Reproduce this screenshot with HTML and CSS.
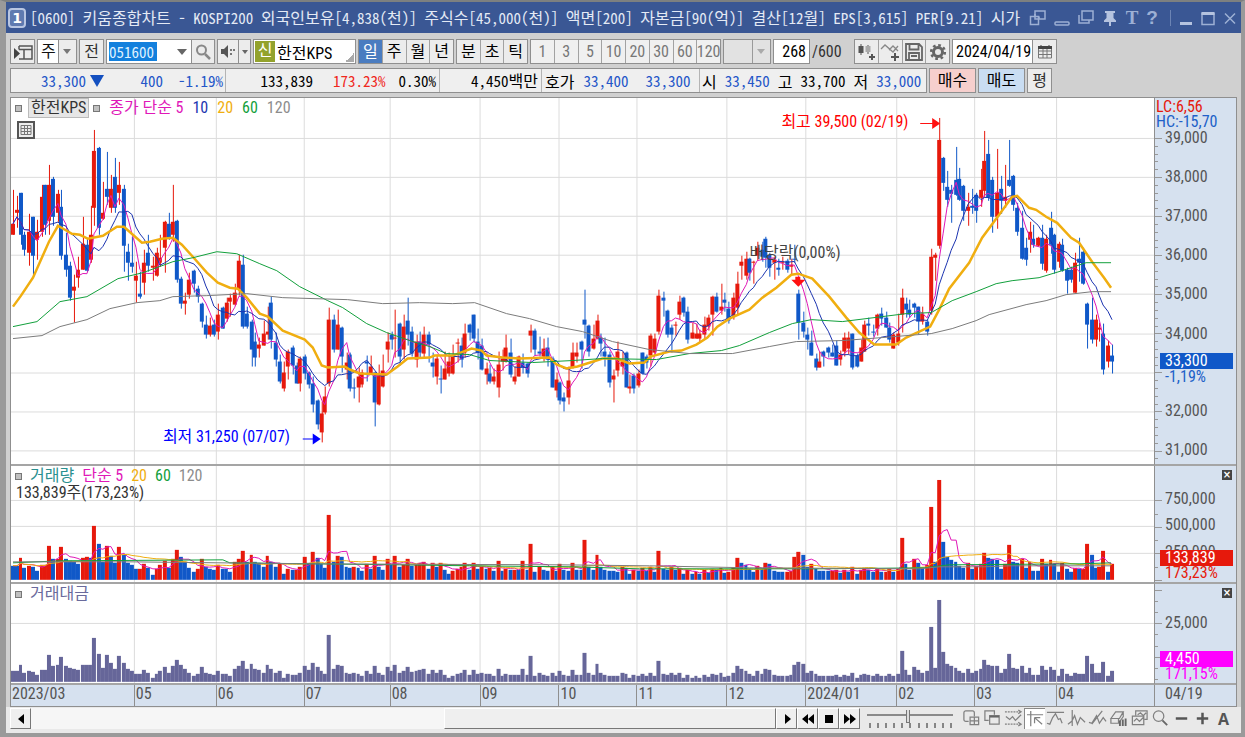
FILE: index.html
```html
<!DOCTYPE html>
<html lang="ko">
<head>
<meta charset="utf-8">
<title>[0600] 키움종합차트</title>
<link rel="stylesheet" href="styles.css">
</head>
<body>
<div class="window">
  <header class="titlebar">
    <span class="win-no">1</span>
    <h1 class="title">[0600] <span class="ko">키움종합차트</span> - KOSPI200 <span class="ko">외국인보유</span>[4,838(<span class="ko">천</span>)] <span class="ko">주식수</span>[45,000(<span class="ko">천</span>)] <span class="ko">액면</span>[200] <span class="ko">자본금</span>[90(<span class="ko">억</span>)] <span class="ko">결산</span>[12<span class="ko">월</span>] EPS[3,615] PER[9.21] <span class="ko">시가</span></h1>
    <div class="win-tools">
      <button aria-label="화면 복사"><svg viewBox="0 0 18 18"><path d="M6 2h10v8H6zM1.500 7.500h8v8h-8z"/><path d="M6 7.500V5M10 10v-2.500"/></svg></button>
      <button aria-label="숨기기"><svg viewBox="0 0 18 18"><rect x="2" y="13" width="14" height="3" rx="1"/></svg></button>
      <button aria-label="겹치기"><svg viewBox="0 0 18 18"><path d="M5 2h11v9H5zM2 6v8h10v-3"/></svg></button>
      <button aria-label="고정"><svg viewBox="0 0 18 18"><path class="fill" d="M4 2h10v2h-1.500v5l2.500 2.500V13h-5v4H8v-4H3v-1.500L5.500 9V4H4z"/></svg></button>
      <button aria-label="글자" class="glyph">T</button>
      <button aria-label="도움말" class="glyph q">?</button>
      <i class="sep"></i>
      <button aria-label="최소화"><svg viewBox="0 0 18 18"><path class="thick" d="M3 14.500h12"/></svg></button>
      <button aria-label="최대화"><svg viewBox="0 0 18 18"><path d="M3 4.500h12v11H3z"/><path class="thick" d="M2.500 4.500h13"/></svg></button>
      <button aria-label="닫기"><svg viewBox="0 0 18 18"><path d="M4 4.500l10 10M14 4.500l-10 10"/></svg></button>
    </div>
  </header>

  <form class="toolbar">
    <button type="button" class="btn w25" aria-label="패널"><svg width="20" height="20" viewBox="0 0 20 20"><path d="M6 4h13v13H6M6 7.500h13M11 7.500V17M6 4v3.500" fill="none" stroke="#555" stroke-width="1.500"/><path d="M1 6v11l6-5.500z" fill="#444"/></svg></button>
    <label class="drop kind"><select aria-label="구분"><option>주</option></select></label>
    <button type="button" class="btn w25">전</button>
    <span class="code stock"><input class="code-in" aria-label="종목코드" value="051600"><button type="button" class="arrow" aria-label="목록"></button><button type="button" class="inner" aria-label="검색"><svg width="20" height="20" viewBox="0 0 20 20"><circle cx="8.500" cy="8" r="4.500" fill="none" stroke="#888" stroke-width="2"/><path d="M12 12l5 5" stroke="#888" stroke-width="2.500"/></svg></button></span>
    <span class="code sound"><button type="button" class="inner first" aria-label="음성"><svg width="18" height="18" viewBox="0 0 18 18"><path d="M2 6h3l4-4v13l-4-4H2z" fill="#555"/><path d="M11 6h2v2h-2zM14 6h2v2h-2zM11 10h2v2h-2z" fill="#777"/></svg></button><button type="button" class="arrow slim" aria-label="음성 목록"></button></span>
    <span class="name"><b>신</b><input aria-label="종목명" value="한전KPS"></span>
    <span class="group g4"><button type="button" class="on">일</button><button type="button">주</button><button type="button">월</button><button type="button">년</button></span>
    <span class="group g3"><button type="button">분</button><button type="button">초</button><button type="button">틱</button></span>
    <span class="group g8 dim"><button type="button">1</button><button type="button">3</button><button type="button">5</button><button type="button">10</button><button type="button">20</button><button type="button">30</button><button type="button">60</button><button type="button">120</button></span>
    <label class="drop empty"><select aria-label="주기" disabled><option></option></select></label>
    <span class="count"><input aria-label="표시 봉수" value="268"><span>/600</span></span>
    <span class="group g4">
      <button type="button" aria-label="차트 종류"><svg width="20" height="20" viewBox="0 0 20 20"><path d="M5 2v11M12 3v9" stroke="#555"/><path d="M2.500 4h5v7h-5z" fill="#555"/><path d="M9.500 4h5v6h-5z" fill="#aaa"/><path d="M13 15h6M16 12v6" stroke="#555" stroke-width="2"/></svg></button>
      <button type="button" aria-label="지표 추가"><svg width="20" height="20" viewBox="0 0 20 20"><path d="M1 7l4-4 8 7 5-6M9 8l4-4 5 5" fill="none" stroke="#888" stroke-width="1.300"/><path d="M11 15h8M15 11v8" stroke="#555" stroke-width="2"/></svg></button>
      <button type="button" aria-label="저장"><svg width="20" height="20" viewBox="0 0 20 20"><path d="M2 2h13l3 3v13H2zM5.500 2v5.500h9V2M5 18v-7h10v7M7 14h6" fill="none" stroke="#666" stroke-width="1.800"/></svg></button>
      <button type="button" aria-label="설정"><svg width="20" height="20" viewBox="0 0 20 20"><circle cx="10" cy="10" r="4.500" fill="none" stroke="#666" stroke-width="3"/><circle cx="10" cy="10" r="6.800" fill="none" stroke="#666" stroke-width="2.600" stroke-dasharray="2.670 2.670"/></svg></button>
    </span>
    <span class="date"><input aria-label="날짜" value="2024/04/19"><button type="button" aria-label="달력"><svg width="16" height="16" viewBox="0 0 16 16"><path d="M1.500 3h13v11h-13zM1.500 10.500h13M1.500 7h13M6 5v9M10 5v9" fill="none" stroke="#777"/><path d="M1 2h14v3H1z" fill="#444"/><path d="M4 1v2M12 1v2" stroke="#444"/></svg></button></span>
  </form>

  <div class="quote">
    <div class="info">
      <div class="cell c1"><span class="n1 dn">33,300</span><i class="tri"></i><span class="n2 dn">400</span><span class="n3 dn">-1.19%</span></div>
      <div class="cell c2"><span class="n4">133,839</span><span class="n5 up">173.23%</span><span class="n6">0.30%</span></div>
      <div class="cell c3"><span>4,450<span class="ko">백만</span></span></div>
      <div class="cell c4"><span class="ko">호가</span><span class="dn">33,400</span><span class="dn">33,300</span></div>
      <div class="cell c5"><span class="ko">시</span><span class="dn">33,450</span><span class="ko">고</span><span>33,700</span><span class="ko">저</span><span class="dn">33,000</span></div>
    </div>
    <button class="btn buy">매수</button>
    <button class="btn sell">매도</button>
    <button class="btn w25">평</button>
  </div>

  <main class="chart">
    <section class="panel" id="price">
      <svg class="plot" preserveAspectRatio="none"></svg>
      <div class="legend"><i class="box"></i><span class="tag">한전KPS</span><i class="box"></i><span class="k5">종가 단순 5</span><span class="k10">10</span><span class="k20">20</span><span class="k60">60</span><span class="k120">120</span></div>
      <button class="grid-btn" aria-label="표 보기"><svg width="18" height="18" viewBox="0 0 18 18"><path d="M1 1h16v16H1z" fill="#eee" stroke="#555" stroke-width="2"/><path d="M4 4.500h10v9H4zM4 7.500h10M4 10.500h10M7.500 4v10M10.500 4v10" fill="none" stroke="#777"/></svg></button>
    </section>
    <aside class="axis" id="price-axis"></aside>
    <section class="panel" id="volume">
      <svg class="plot" preserveAspectRatio="none"></svg>
      <div class="legend"><i class="box"></i><span class="vol">거래량</span><span class="k5">단순 5</span><span class="k20">20</span><span class="k60">60</span><span class="k120">120</span></div>
      <div class="sub">133,839주(173,23%)</div>
    </section>
    <aside class="axis" id="volume-axis"><button class="close" aria-label="거래량 닫기"></button></aside>
    <section class="panel" id="value">
      <svg class="plot" preserveAspectRatio="none"></svg>
      <div class="legend"><i class="box"></i><span class="val">거래대금</span></div>
    </section>
    <aside class="axis" id="value-axis"><button class="close" aria-label="거래대금 닫기"></button></aside>
    <div class="dates" id="dates"></div>
    <div class="dates today"><span>04/19</span></div>
  </main>

  <footer class="bottom">
    <button class="sbtn" aria-label="이전"><svg viewBox="0 0 18 18"><path d="M12 4v10L6 9z"/></svg></button>
    <div class="track"><div class="thumb"></div></div>
    <button class="sbtn" aria-label="다음"><svg viewBox="0 0 18 18"><path d="M7 4v10l6-5z"/></svg></button>
    <button class="sbtn" aria-label="뒤로"><svg viewBox="0 0 18 18"><path d="M9 4v10L3 9zM15 4v10L9 9z"/></svg></button>
    <button class="sbtn" aria-label="정지"><svg viewBox="0 0 18 18"><path d="M5 5h8v8H5z"/></svg></button>
    <button class="sbtn" aria-label="앞으로"><svg viewBox="0 0 18 18"><path d="M3 4v10l6-5zM9 4v10l6-5z"/></svg></button>
    <div class="zoomer"><input type="range" aria-label="확대" min="0" max="100" value="47"><svg viewBox="0 0 86 5" preserveAspectRatio="none"><path d="M3 0v5M11 0v5M19 0v5M27 0v5M35 0v5M43 0v5M52 0v5M60 0v5M68 0v5M76 0v5M84 0v5"/></svg></div>
    <div class="tools">
      <button aria-label="추가"><svg viewBox="0 0 20 20"><path d="M7 13H4a2 2 0 0 1-2-2V4a2 2 0 0 1 2-2h7a2 2 0 0 1 2 2v4"/><path d="M8.500 8.500h9v8h-9zM13 8.500v8M8.500 12.500h9"/></svg></button>
      <button aria-label="겹침"><svg viewBox="0 0 20 20"><path d="M6 12H2V2h10v4"/><path d="M7 7h10v9H7z"/><path class="thick" d="M7 8h10"/></svg></button>
      <button aria-label="구간"><svg viewBox="0 0 20 20"><path stroke-dasharray="2 1" d="M1 3h16M1 16h16"/><path d="M15 1l3 2-3 2M15 14l3 2-3 2M2 8l4 3 3-3 3 4 6-6"/></svg></button>
      <button class="pressed" aria-label="십자선"><svg viewBox="0 0 20 20"><path d="M1 5h17M5 1v16M9 8h6M9 8v6M9 8l8 7"/></svg></button>
      <button aria-label="수평선"><svg viewBox="0 0 20 20"><path d="M1 3.500h18M1 15l3 1 3-7 3-4 3 6 2-1 2 5"/></svg></button>
      <button aria-label="수직선"><svg viewBox="0 0 20 20"><path d="M5.500 1v17M1 16l4-3 3-6 3 9 3-7 5 5"/></svg></button>
      <button aria-label="추세선"><svg viewBox="0 0 20 20"><path d="M4 16L15 2M1 14l3 1 5-8 3 8 4-6 3 4"/></svg></button>
      <button aria-label="지우개"><svg viewBox="0 0 20 20"><path d="M2 10l5-7h8l-4 7zM2 10v5h8v-5M10 15l5-7V3"/><path class="thick" d="M11.500 12v6M14.500 11v7M17.500 10v8"/></svg></button>
      <button aria-label="이미지"><svg viewBox="0 0 20 20"><path d="M6 7V2h12v9h-3M8 6l3-2 3 3 3-3"/><path d="M2.500 7.500h12v9h-12zM4 13l3-3 3 3 4-4"/></svg></button>
      <button aria-label="돋보기"><svg viewBox="0 0 20 20"><circle cx="8" cy="7.500" r="5.500"/><path class="thick" d="M12 12l5 5"/></svg></button>
      <button aria-label="축소"><svg viewBox="0 0 20 20"><path class="heavy" d="M4 10h12"/></svg></button>
      <button aria-label="확대"><svg viewBox="0 0 20 20"><path class="heavy" d="M4 10h12M10 4v12"/></svg></button>
      <button aria-label="자동" class="letter">A</button>
    </div>
  </footer>
</div>
<script src="chart.js"></script>
</body>
</html>
```
FILE: styles.css
```css
* { box-sizing: border-box; }
body {
  margin: 0;
  background: #9a9a9a;
  font: 400 16px/20px "Roboto Condensed", "Noto Sans CJK KR", sans-serif;
  color: #333;
}
button, input, select {
  font: inherit; color: inherit; margin: 0; padding: 0;
  border: 0; border-radius: 0; background: none; min-width: 0;
}
button { display: flex; align-items: center; justify-content: center; }
svg { display: block; }

.window {
  display: flex; flex-direction: column;
  min-height: 100vh;
  border: solid #9a9a9a;
  border-width: 2px 4px 4px 6px;
  border-top-color: #7d8080;
  background: #d0d0d0;
}
.ko { font-size: 16px; }

/* title bar */
.titlebar {
  display: flex; align-items: center; gap: 4px;
  height: 31px; padding: 0 0 0 2px;
  background: #3a5794; color: #e4eaf5;
}
.win-no {
  flex: none; width: 18px; height: 20px;
  border: 2px solid #b9c6e2; border-radius: 4px;
  background: #5f7ab0; color: #fff;
  font: bold 14px/16px "DejaVu Sans", sans-serif; text-align: center;
}
.title {
  flex: 1 1 0; min-width: 0; overflow: hidden; white-space: nowrap;
  margin: 0;
  font: 400 15px/24px "Noto Sans Mono CJK KR", "Noto Sans CJK KR", monospace;
}
.win-tools { flex: none; display: flex; align-items: center; }
.win-tools button { width: 24px; height: 24px; color: #9db0d4; }
.win-tools .sep ~ button { width: 22px; }
.win-tools svg { width: 18px; height: 18px; fill: none; stroke: #9db0d4; stroke-width: 1.5; }
.win-tools .fill { fill: #b5c3df; stroke: none; }
.win-tools .thick { stroke: #b5c3df; stroke-width: 3; }
.win-tools .glyph { width: 20px; font: bold 19px/24px "Liberation Serif", serif; }
.win-tools .q { font-family: "Liberation Sans", sans-serif; }
.sep { width: 1px; height: 16px; margin: 0 4px 0 8px; background: #6c84b4; }

/* tool row */
.toolbar { display: flex; gap: 2px; padding: 6px 4px 0; height: 31px; }
.btn, .drop, .code, .name, .group, .count input, .date {
  flex: none; height: 25px; border: 1px solid #8f8f8f; background: #ececec;
}
.w25 { width: 25px; }
.drop { position: relative; display: block; background: #fff; }
.drop select { appearance: none; width: 100%; height: 23px; padding-left: 3px; color: #111; opacity: 1; }
.drop::after {
  content: ""; position: absolute; right: 5px; top: 9px; pointer-events: none;
  border: 4px solid transparent; border-width: 5px 4px 0; border-top-color: #777;
}
.kind { width: 40px; background: linear-gradient(90deg, #fff 20px, #8f8f8f 20px 21px, #ececec 21px); }
.empty { width: 48px; background: linear-gradient(90deg, #e2e2e2 28px, #9a9a9a 28px 29px, #e2e2e2 29px); }
.empty::after { border-top-color: #aaa; }
.code { display: flex; background: #fff; }
.stock { width: 109px; }
.sound { width: 34px; }
.code-in {
  flex: none; align-self: center; width: 48px; height: 19px; margin: 0 16px 0 2px;
  background: #1380dd; color: #dff0ff;
  font: 400 15px/19px "Noto Sans Mono CJK KR", monospace;
}
.arrow { width: 18px; background: #fff; }
.arrow::after { content: ""; border: solid transparent; border-width: 6px 5px 0; border-top-color: #666; }
.arrow.slim { width: 12px; background: #ececec; border-left: 1px solid #8f8f8f; }
.arrow.slim::after { border-width: 4px 3px 0; }
.inner { width: 23px; background: #ececec; border-left: 1px solid #8f8f8f; }
.inner.first { width: 20px; border-left: 0; }
.name {
  display: flex; align-items: center; gap: 2px; width: 103px; padding-left: 1px;
  background: linear-gradient(135deg, transparent 50%, #aaa 50%) right 1px bottom 1px / 9px 9px no-repeat #fff;
}
.name b { width: 20px; height: 21px; background: #93a22c; color: #fff; font-weight: 400; text-align: center; line-height: 20px; }
.name input { width: 74px; height: 21px; color: #000; }
.group { display: flex; }
.g3 { width: 72px; } .g4 { width: 96px; } .g8 { width: 191px; }
.group button { flex: 1; border-left: 1px solid #a2a2a2; color: #000; }
.group button:first-child { border-left: 0; }
.group .on { background: #4a7cc0; color: #fff; }
.dim button { color: #777; background: #f0f0f0; }
.count { display: flex; align-items: center; width: 79px; gap: 2px; }
.count input { width: 37px; background: #fff; text-align: right; padding-right: 3px; color: #000; }
.date { display: flex; background: #fff; }
.date input { width: 79px; padding-left: 3px; color: #000; }
.date button { width: 24px; border-left: 1px solid #8f8f8f; background: #ececec; }

/* quote row */
.quote { display: flex; gap: 2px; padding: 4px 4px 0; height: 29px; }
.info {
  flex: none; display: flex; width: 917px; height: 25px;
  border: 1px solid #8f8f8f; background: #efefef; color: #000;
  font: 400 15px/22px "Noto Sans Mono CJK KR", "Noto Sans CJK KR", monospace;
  white-space: nowrap;
}
.cell { display: flex; align-items: center; border-right: 1px solid #b4b4b4; height: 23px; }
.cell:last-child { border-right: 0; }
.dn { color: #2456c8; }
.up { color: #f0281c; }
.c1 { width: 215px; } .n1 { width: 75px; text-align: right; }
.tri { margin: 0 0 0 4px; border: solid transparent; border-width: 12px 7px 0; border-top-color: #1450c0; }
.n2 { width: 59px; text-align: right; } .n3 { width: 60px; text-align: right; }
.c2 { width: 214px; justify-content: flex-end; gap: 20px; padding-right: 3px; }
.n6 { margin-left: -7px; }
.c3 { width: 102px; justify-content: flex-end; padding-right: 3px; }
.c4 { width: 158px; gap: 17px; padding-left: 3px; }
.c4 .ko { margin-right: -8px; }
.c5 { flex: 1; gap: 8px; padding-left: 2px; }
.buy, .sell { width: 47px; color: #000; }
.buy { background: #f6cfcd; }
.sell { background: #c9ddf2; }

/* chart */
.chart {
  flex: 1; display: grid; margin: 4px 4px 0;
  grid-template-columns: minmax(0, 1fr) 82px;
  grid-template-rows: minmax(0, 369fr) minmax(0, 118fr) minmax(0, 101fr) 21px;
  border: 1px solid #8f8f8f; background: #fff;
}
.panel, .axis { position: relative; overflow: hidden; border-bottom: 2px solid #a5a5a5; }
.axis { border-left: 1px solid #8f8f8f; background: #d6e1ef; }
.plot { position: absolute; inset: 0; width: 100%; height: 100%; }
.legend { position: absolute; left: 4px; top: 0; display: flex; align-items: center; gap: 8px; height: 20px; white-space: nowrap; }
#price .legend { gap: 9px; }
.box { width: 7px; height: 7px; border: 1px solid #777; background: #c0c0c0; }
.legend .tag { margin: 0 -5px 0 -3px; padding: 0 2px; border: 1px solid #bbb; background: #e6e6e6; line-height: 18px; }
.k5 { color: #e018b8; } .k10 { color: #1c34b0; } .k20 { color: #f0ae10; } .k60 { color: #12a03c; } .k120 { color: #8c8c8c; }
.vol { color: #2a9090; } .val { color: #6a6a9c; }
.sub { position: absolute; left: 5px; top: 17px; }
.grid-btn { position: absolute; left: 6px; top: 23px; }
.label { position: absolute; transform: translateY(-50%); white-space: nowrap; line-height: 18px; }
.axis .label { left: 10px; color: #555; }
.axis .label.hc { left: 1px; line-height: 16px; }
.axis .label.badge { left: 5px; right: 3px; padding-left: 5px; color: #fff; line-height: 16px; }
.axis .label.blue { color: #2060c8; } .axis .label.red { color: #e6190c; } .axis .label.pink { color: #f0f; }
.b-blue { background: #1058c8; } .b-red { background: #e6190c; } .b-pink { background: #f0f; }
.tick { position: absolute; left: 0; width: 3px; height: 1px; background: #999; }
.tick.major { width: 7px; }
.close { position: absolute; right: 4px; top: 4px; width: 10px; height: 10px; background: #444; }
.close::before { content: "×"; color: #fff; font: bold 10px/10px "DejaVu Sans", sans-serif; }
.note-hi { color: #f00; } .note-lo { color: #00f; } .note-div { color: #444; }
.dates { position: relative; overflow: hidden; background: #d6e1ef; color: #555; }
.dates span { position: absolute; top: 0; height: 21px; padding-left: 1px; border-left: 1px solid #8f8f8f; line-height: 18px; }
.dates span:first-child { border-left: 0; }
.today { border-left: 1px solid #8f8f8f; }
.today span { left: 9px; }

.grid { stroke: #dcdcdc; }
.line { fill: none; stroke-width: 1; }
.m5 { stroke: #e018b8; } .m10 { stroke: #1c34b0; } .m20 { stroke: #f0ae10; } .m60 { stroke: #12a03c; } .m120 { stroke: #7c7c7c; }
.wide { stroke-width: 2.5; }
.r { fill: #e6190c; } .b { fill: #1058c8; } .v { fill: #666699; }
.arr-hi { fill: #f11; } .arr-lo { fill: #00f; }

/* bottom bar */
.bottom { display: flex; align-items: center; height: 26px; padding: 0 3px 3px 4px; background: #e9e9e9; }
.sbtn {
  flex: none; width: 21px; height: 21px; background: #efefef;
  border: 1px solid #fff; border-right-color: #777; border-bottom-color: #777;
}
.sbtn svg { width: 18px; height: 18px; fill: #000; }
.track { flex: 1; height: 21px; background: #f6f6f6; }
.thumb { width: 44.5%; height: 21px; margin-left: 55.5%; background: #efefef; border: 1px solid #fff; border-right-color: #777; border-bottom-color: #777; }
.zoomer { flex: none; width: 90px; margin-left: 7px; }
.zoomer input { appearance: none; display: block; width: 86px; height: 14px; background: linear-gradient(#8a8a8a, #8a8a8a) 0 5px / 100% 2px no-repeat; }
.zoomer input::-webkit-slider-thumb { appearance: none; width: 4px; height: 13px; background: #ddd; border: 1px solid #777; border-top: 0; }
.zoomer svg { width: 86px; height: 5px; stroke: #222; stroke-width: 1; }
.tools { flex: none; display: flex; margin-left: 4px; padding-right: 4px; }
.tools button { width: 21px; height: 21px; }
.tools svg { width: 19px; height: 19px; fill: none; stroke: #808080; stroke-width: 1.3; }
.tools .thick { stroke: #666; stroke-width: 2; }
.tools .heavy { stroke: #555; stroke-width: 2.6; }
.tools .pressed { background: #fff; border: 1px solid #888; border-right: 0; border-bottom: 0; }
.tools .letter { color: #555; font: bold 16px/20px "Open Sans", "DejaVu Sans", sans-serif; }
```
FILE: chart.js
```js
// Candles: x, high, body top, body bottom, low, colour, traded-value bar height.
const CANDLES = `
13 190 224 235 235 r 11,17 196 210 213 228 r 11,21 193 193 235 245 b 17,24 232 235 250 256 b 9,29 214 232 253 266 r 11,33 217 217 256 277 b 10,37 220 232 240 260 r 7,42 185 197 232 237 r 12,45 185 185 225 235 b 12,49 165 185 221 235 r 27,53 177 179 217 226 b 16,58 190 194 213 222 r 17,61 190 207 256 260 b 25,66 233 255 270 277 b 16,70 262 266 298 301 b 14,74 275 287 291 323 r 13,78 257 270 278 288 r 12,83 217 244 270 270 r 17,87 238 245 271 272 b 17,91 206 235 260 263 r 17,94 130 151 208 226 r 44,99 147 148 228 235 b 28,103 182 213 219 220 r 14,107 152 189 197 205 b 27,111 175 189 208 213 r 19,115 158 177 208 213 b 13,119 162 185 193 205 r 26,124 185 189 246 272 b 19,128 244 252 263 281 b 13,132 237 263 267 273 b 11,
136 262 276 281 303 r 8,140 272 294 297 299 b 8,144 250 263 283 295 r 12,148 235 253 266 272 b 9,153 257 266 268 281 r 4,157 248 253 276 277 r 8,160 235 258 263 267 r 11,165 221 222 248 273 r 15,169 213 224 238 240 b 9,173 185 222 235 242 r 16,177 220 221 280 283 b 22,181 277 279 304 309 b 17,185 293 301 304 315 r 13,189 273 280 295 299 r 9,194 270 271 284 293 b 6,198 286 289 297 303 b 8,202 303 304 322 328 b 15,206 316 325 335 339 b 9,210 318 326 335 337 r 8,214 320 325 335 337 b 7,218 304 315 332 340 r 11,223 307 308 329 329 b 8,227 298 303 319 322 r 8,230 294 298 302 317 r 6,235 284 293 305 306 r 13,239 255 261 290 296 r 16,243 255 265 327 329 b 21,247 307 314 327 329 b 13,252 320 322 350 367 b 18,255 333 342 358 367 b 13,
259 338 345 349 358 r 12,264 321 334 346 346 r 9,268 307 332 335 340 r 17,271 297 303 340 349 b 13,276 333 343 360 367 b 9,280 355 362 382 384 b 11,284 362 373 389 392 r 4,288 350 352 367 380 r 8,293 346 348 366 375 b 7,297 363 366 384 384 b 7,300 357 359 384 392 r 9,305 355 357 374 380 b 16,309 372 373 385 389 b 12,313 377 384 405 413 b 19,318 400 401 425 430 b 15,322 402 414 433 443 r 11,325 387 397 413 415 r 8,329 308 320 384 387 r 47,334 315 320 350 353 b 13,338 310 325 350 350 r 17,342 327 328 357 373 b 16,347 353 363 370 380 r 9,350 353 355 389 392 b 8,354 379 388 389 399 b 9,359 368 377 388 403 r 8,362 370 373 385 388 r 6,367 356 362 364 382 b 11,371 356 367 375 375 r 8,375 372 373 403 427 b 16,379 365 374 405 406 r 9,383 355 371 387 388 r 7,388 333 342 350 363 r 15,392 332 335 340 350 b 11,
395 310 338 339 358 r 17,400 323 324 357 366 b 9,404 315 327 350 360 r 11,408 298 321 335 346 b 15,412 327 332 354 357 b 10,417 335 342 360 368 r 11,420 332 342 353 358 b 12,424 327 335 354 358 r 13,429 332 335 345 363 b 8,433 353 363 367 378 b 12,437 355 359 377 385 r 9,441 366 379 380 394 b 12,445 352 369 380 380 r 7,449 353 362 374 377 r 4,453 345 357 374 375 r 6,458 339 343 344 363 r 8,462 338 346 360 368 b 9,465 324 334 353 358 r 12,470 324 325 333 341 b 7,474 315 315 339 343 b 12,478 329 342 353 360 b 8,482 339 346 370 371 b 9,487 363 369 375 385 r 8,490 365 374 382 384 b 8,494 369 377 382 385 r 6,499 352 365 388 398 r 13,503 350 359 362 371 r 6,506 335 348 362 363 r 8,511 339 353 375 378 b 7,515 367 377 382 385 r 7,519 356 357 377 377 r 7,523 354 363 368 374 b 13,528 363 364 374 378 b 7,531 325 331 336 353 r 26,535 329 331 350 356 b 6,540 337 352 354 357 b 9,544 339 349 357 362 r 7,548 338 348 360 367 b 6,553 357 359 388 388 b 9,557 373 380 391 398 r 6,
560 382 383 401 405 b 11,564 393 398 402 412 b 7,569 367 381 398 405 r 6,573 343 353 368 369 r 12,577 343 353 357 363 r 7,582 341 342 350 369 b 7,585 290 320 325 339 b 29,589 325 326 352 357 b 9,594 325 339 349 350 r 7,598 315 321 339 340 r 18,601 334 338 344 357 b 9,605 338 352 357 367 b 7,610 352 355 383 388 b 6,614 370 376 380 403 r 6,618 342 352 371 377 r 6,623 352 362 367 375 r 9,627 352 353 388 388 b 8,630 375 387 389 394 r 4,634 374 376 389 394 b 7,639 370 374 386 388 r 6,643 353 353 374 375 b 8,647 355 357 363 369 b 6,651 334 336 356 367 r 9,655 334 339 353 356 r 6,659 290 296 332 335 r 21,664 292 298 301 317 b 8,668 310 311 335 338 b 7,672 325 328 335 353 b 9,676 322 325 326 336 r 7,680 296 302 315 320 r 9,684 297 298 313 317 b 4,688 307 312 340 344 b 7,693 323 333 339 339 r 4,697 324 334 339 339 r 6,700 330 334 339 343 r 4,705 317 325 335 340 r 7,709 315 318 327 331 r 5,713 296 297 315 336 r 8,717 293 297 312 313 b 7,722 284 307 311 315 r 9,725 293 300 303 312 b 5,729 302 309 321 324 b 6,
734 293 298 316 320 r 9,738 272 284 308 316 r 16,742 256 262 266 280 r 13,747 252 259 276 280 r 11,750 258 259 273 281 b 8,754 261 262 263 284 r 6,758 242 248 256 261 r 11,763 242 250 257 262 b 8,766 237 239 258 268 b 13,770 253 255 268 277 b 12,775 257 260 263 280 r 7,779 259 268 270 276 b 6,783 257 262 263 270 r 6,788 259 261 270 273 b 6,792 259 265 267 275 r 7,795 245 259 260 263 b 17,799 290 294 323 340 b 20,804 312 323 332 338 b 18,808 328 335 340 350 b 9,812 331 343 356 356 b 11,817 354 359 368 371 b 8,820 352 362 368 368 r 6,824 351 352 357 367 b 6,829 347 348 353 358 b 6,833 345 353 357 357 b 6,837 341 346 366 366 b 7,841 351 355 360 366 r 5,845 333 338 352 357 r 7,849 332 338 349 355 r 6,853 334 334 368 370 b 9,858 354 356 367 368 b 4,862 340 348 362 362 r 7,865 321 325 352 352 r 8,869 318 324 326 336 b 7,874 325 332 333 337 b 6,878 314 315 329 336 r 8,882 308 314 319 326 b 6,887 312 318 328 328 b 6,890 323 328 340 343 b 8,894 333 335 349 349 r 6,
899 314 334 343 346 r 8,903 289 298 315 333 r 31,907 298 304 310 318 b 12,910 300 310 315 318 b 7,915 303 304 308 318 b 15,919 307 307 322 335 b 12,923 307 314 322 325 r 9,928 320 322 332 336 b 11,932 249 257 311 315 r 55,936 253 255 258 281 r 14,940 118 140 246 249 r 82,944 157 158 183 191 b 30,948 171 187 200 207 b 18,952 185 190 194 223 b 16,957 147 180 195 196 b 14,960 168 179 200 201 b 11,964 185 186 211 221 b 9,969 193 207 211 226 r 13,973 189 206 208 214 b 9,977 193 195 211 223 b 11,982 169 190 198 207 r 13,985 131 161 191 197 r 22,989 140 154 198 201 b 17,993 177 180 217 233 b 16,998 149 193 217 229 r 16,1002 176 189 201 214 b 9,1006 165 197 201 208 r 13,1010 140 180 186 187 b 28,1014 175 176 205 211 b 14,1018 203 208 232 236 b 13,1023 211 228 259 260 b 16,1027 238 248 260 266 b 9,1031 222 232 240 253 r 14,1034 225 239 245 248 b 7,1039 237 238 246 247 r 7,1043 225 238 264 270 b 16,1047 235 239 271 273 r 12,1052 212 228 245 254 b 15,1055 234 235 270 274 b 12,1060 242 244 262 268 r 6,1063 239 245 271 272 b 13,1068 268 270 281 294 b 8,1072 267 270 280 283 b 6,1076 253 263 293 293 r 9,1080 238 259 263 282 b 8,1084 248 252 284 285 b 8,1088 303 304 325 349 b 26,1093 298 320 340 344 b 18,1097 315 320 340 347 r 9,1100 323 328 330 342 r 9,1104 324 334 370 375 b 20,1109 341 346 362 368 r 6,1113 345 356 362 374 b 11`
  .trim().split(',').map(row => {
    const [x, high, top, bottom, low, color, value] = row.trim().split(' ');
    return { x: +x, high: +high, top: +top, bottom: +bottom, low: +low, color, value: +value };
  });

const LINES = {
  m20: '13,307 21,296 33,278 49,242 58,226 65,230 72,234 80,235 88,239 103,236 117,227 124,227 142,243 150,242 162,239 173,238 182,245 193,257 207,273 218,283 230,288 238,289 247,298 260,314 268,317 283,331 305,340 313,348 322,366 328,368 345,367 350,370 360,374 387,375 398,367 408,359 430,358 435,356 453,356 472,349 482,351 487,356 503,358 520,359 550,358 557,365 567,369 578,367 597,361 603,359 617,359 630,364 645,363 651,357 670,352 682,351 697,345 708,338 718,327 730,319 750,310 763,298 777,288 792,275 799,274 813,279 830,297 847,318 860,333 875,345 897,345 907,338 931,327 940,310 950,289 970,263 983,238 1000,215 1013,197 1018,196 1030,208 1037,210 1047,217 1058,223 1072,238 1080,243 1093,262 1105,278 1112,288',
  m60: '13,327 37,322 60,302 87,297 118,279 143,273 173,262 193,258 217,252 237,254 260,264 277,271 300,287 328,301 343,308 367,324 387,333 410,341 430,347 447,354 470,355 490,361 533,363 573,361 603,359 657,360 690,354 722,351 740,346 770,333 793,324 812,320 843,322 883,317 907,314 932,313 953,301 977,292 997,284 1013,281 1040,278 1063,271 1087,263 1112,263',
  m120: '13,339 42,336 60,327 87,320 110,309 137,303 160,301 173,297 207,296 247,294 283,298 348,300 383,304 420,303 453,304 475,303 507,314 530,319 557,327 583,332 613,342 650,350 690,354 733,354 770,347 797,342 843,341 883,338 932,334 953,329 977,321 990,315 1027,305 1047,301 1067,295 1093,292 1112,292',
  v60: '13,564 60,562 223,561 230,564 400,566 470,567 575,568 640,570 820,570 925,569 950,566 1080,565 1112,564',
  v120: '13,563 130,563 310,565 560,566 650,567 750,569 920,570 940,568 985,568 1010,567 1112,567',
};

const MONTHS = [[134, '05'], [216, '06'], [304, '07'], [390, '08'], [480, '09'], [559, '10'], [637, '11'], [727, '12'], [806, '2024/01'], [897, '02'], [975, '03'], [1057, '04']];
const PANELS = {
  price: { top: 98, bottom: 467, grid: [138, 177, 216, 255, 294, 334, 373, 412, 451] },
  volume: { top: 467, bottom: 585, grid: [501, 527, 554] },
  value: { top: 585, bottom: 686, grid: [624] },
};
const LEFT = 11, WIDTH = 1144;

const average = (list, n) => list.map((_, i) => {
  const part = list.slice(Math.max(0, i - n + 1), i + 1);
  return part.reduce((a, b) => a + b, 0) / part.length;
});
const points = ys => ys.map((y, i) => `${CANDLES[i].x},${y.toFixed(1)}`).join(' ');
const line = (cls, pts) => `<polyline class="line ${cls}" vector-effect="non-scaling-stroke" points="${pts}"/>`;
const bar = (x, y, w, h, cls) => `<rect class="${cls}" x="${x}" y="${y}" width="${w}" height="${h}"/>`;

const closes = CANDLES.map(c => (c.color === 'r' ? c.top : c.bottom));
const volumes = CANDLES.map((c, i) => c.value * 47.5 / (39 - (closes[i] - 138) / 39.15));
const barWidth = i => (i + 1 < CANDLES.length ? Math.min(4, CANDLES[i + 1].x - CANDLES[i].x) : 4);

const art = {
  price:
    CANDLES.map(c => bar(c.x, c.high, 1, c.low - c.high, c.color) + bar(c.x - 2, c.top, 4, Math.max(1, c.bottom - c.top), c.color)).join('')
    + line('m5', points(average(closes, 5))) + line('m10', points(average(closes, 10)))
    + line('m20 wide', LINES.m20) + line('m60', LINES.m60) + line('m120', LINES.m120)
    + '<path class="arr-hi" d="M921 123h12v-5l8 5.500-8 5.500v-5h-12zM796 277h5v3h5l-7 7-7-7h4z"/>'
    + '<path class="arr-lo" d="M303 439h10v-5l8 5.500-8 5.500v-5h-10z"/>',
  volume:
    volumes.map((v, i) => bar(CANDLES[i].x - 2, Math.round(581 - v), barWidth(i), Math.round(v), i && v > volumes[i - 1] ? 'r' : 'b')).join('')
    + line('m5', points(average(volumes, 5).map(v => 581 - v)))
    + line('m20', points(average(volumes, 20).map(v => 581 - v)))
    + line('m60', LINES.v60) + line('m120', LINES.v120),
  value: CANDLES.map((c, i) => bar(c.x - 2, 683 - c.value, barWidth(i), c.value, 'v')).join(''),
};

for (const [id, p] of Object.entries(PANELS)) {
  const svg = document.querySelector(`#${id} .plot`);
  svg.setAttribute('viewBox', `${LEFT} ${p.top} ${WIDTH} ${p.bottom - p.top - 2}`);
  const grid = p.grid.map(y => `<path class="grid" d="M${LEFT} ${y}.5h${WIDTH}"/>`).join('')
    + MONTHS.map(([x]) => `<path class="grid" d="M${x}.5 ${p.top}v${p.bottom - p.top}"/>`).join('');
  svg.innerHTML = grid + art[id];
}

const place = (id, y) => `${((y - PANELS[id].top) / (PANELS[id].bottom - PANELS[id].top - 2) * 100).toFixed(2)}%`;
function axisLabel(id, y, text, cls = '') {
  document.getElementById(`${id}-axis`).insertAdjacentHTML('beforeend', `<span class="label ${cls}" style="top:${place(id, y)}">${text}</span>`);
}
function ticks(id, from, to, step, every) {
  let html = '';
  for (let y = from, i = 0; y <= to; y += step, i++) html += `<i class="tick ${i % every ? '' : 'major'}" style="top:${place(id, y)}"></i>`;
  document.getElementById(`${id}-axis`).insertAdjacentHTML('beforeend', html);
}
ticks('price', 138, 460, 7.83, 5);
ticks('volume', 501, 582, 13.3, 2);
ticks('value', 591, 684, 11.1, 3);
axisLabel('price', 107, 'LC:6,56', 'hc red');
axisLabel('price', 122, 'HC:-15,70', 'hc blue');
PANELS.price.grid.forEach((y, i) => { if (i !== 6) axisLabel('price', y, `${39 - i},000`); });
axisLabel('price', 361, '33,300', 'badge b-blue');
axisLabel('price', 377, '-1,19%', 'blue');
axisLabel('volume', 500, '750,000');
axisLabel('volume', 526, '500,000');
axisLabel('volume', 553, '250,000');
axisLabel('volume', 559, '133,839', 'badge b-red');
axisLabel('volume', 574, '173,23%', 'red');
axisLabel('value', 624, '25,000');
axisLabel('value', 660, '4,450', 'badge b-pink');
axisLabel('value', 675, '171,15%', 'pink');

const left = x => `${((x - LEFT) / WIDTH * 100).toFixed(2)}%`;
[[782, 122, '최고 39,500 (02/19)', 'note-hi'], [163, 438, '최저 31,250 (07/07)', 'note-lo'], [750, 253, '배당락(0,00%)', 'note-div']].forEach(([x, y, text, cls]) => {
  document.getElementById('price').insertAdjacentHTML('beforeend', `<span class="label ${cls}" style="left:${left(x)};top:${place('price', y)}">${text}</span>`);
});
document.getElementById('dates').innerHTML = [[LEFT, '2023/03'], ...MONTHS].map(([x, t]) => `<span style="left:${left(x)}">${t}</span>`).join('');
```
